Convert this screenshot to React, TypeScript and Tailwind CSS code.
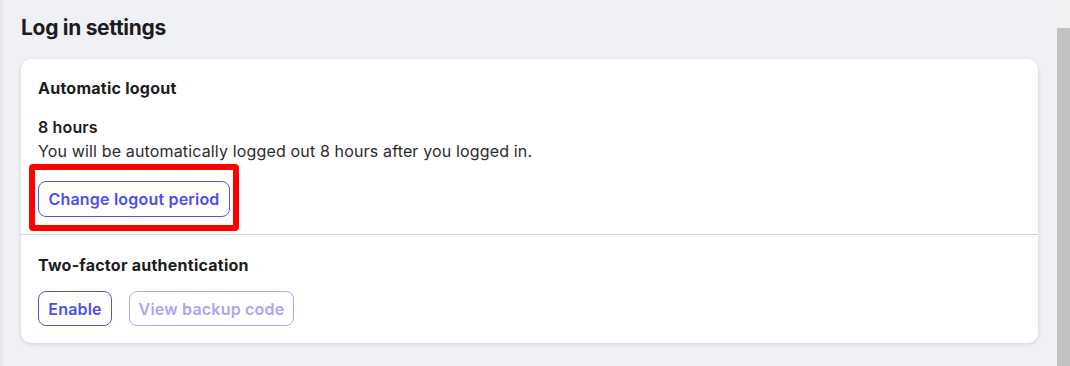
export default function App() {
  return (
    <div className="flex h-[366px] w-full overflow-hidden bg-[#f0f1f5] font-['Inter',sans-serif] tracking-[0.15px] text-[#1c1c1e]">
      <div className="w-[3px] bg-[#e7e8ec]" />

      <main className="flex-1 pl-[18px] pr-[19px]">
        <h2 className="mt-[14px] mb-[17px] text-[21px] leading-[28px] font-bold tracking-[-0.3px]">Log in settings</h2>

        <div className="rounded-[10px] bg-white shadow-[0_1px_4px_rgba(0,0,0,0.13)]">
          {/* Automatic logout */}
          <section className="px-[17px] pt-[17px] pb-[17px]">
            <h3 className="text-[16px] leading-[24px] font-bold tracking-[0.25px]">Automatic logout</h3>
            <p className="mt-[15px] text-[16px] leading-[24px] font-semibold">8 hours</p>
            <p className="text-[16px] leading-[24px] text-[#2b2b2e]">
              You will be automatically logged out 8 hours after you logged in.
            </p>
            <div className="relative mt-[18px] inline-block">
              <button className="h-[36px] w-[192px] rounded-[8px] border border-[#5252f2] text-[16px] font-semibold tracking-[0.2px] text-[#4d4df0]">
                Change logout period
              </button>
              <div className="pointer-events-none absolute -top-[17px] -bottom-[14px] -left-[9px] -right-[9px] rounded-[4px] border-[6px] border-[#ff0000]" />
            </div>
          </section>

          <div className="h-px bg-[#d4d4d8]" />

          {/* Two-factor */}
          <section className="px-[17px] pt-[18px] pb-[17px]">
            <h3 className="text-[16px] leading-[24px] font-bold tracking-[0.25px]">Two-factor authentication</h3>
            <div className="mt-[14px] flex gap-[17px]">
              <button className="h-[35px] w-[74px] rounded-[8px] border border-[#5252f2] text-[16px] font-semibold tracking-[0.2px] text-[#4d4df0]">
                Enable
              </button>
              <button className="h-[35px] w-[165px] rounded-[8px] border border-[#a9a9f8] text-[16px] font-semibold tracking-[0.2px] text-[#a7a7f7]">
                View backup code
              </button>
            </div>
          </section>
        </div>
      </main>

      <div className="flex w-[13px] flex-col">
        <div className="h-[28px] bg-[#f1f1f1]" />
        <div className="flex-1 bg-[#c1c1c1]" />
      </div>
    </div>
  );
}
